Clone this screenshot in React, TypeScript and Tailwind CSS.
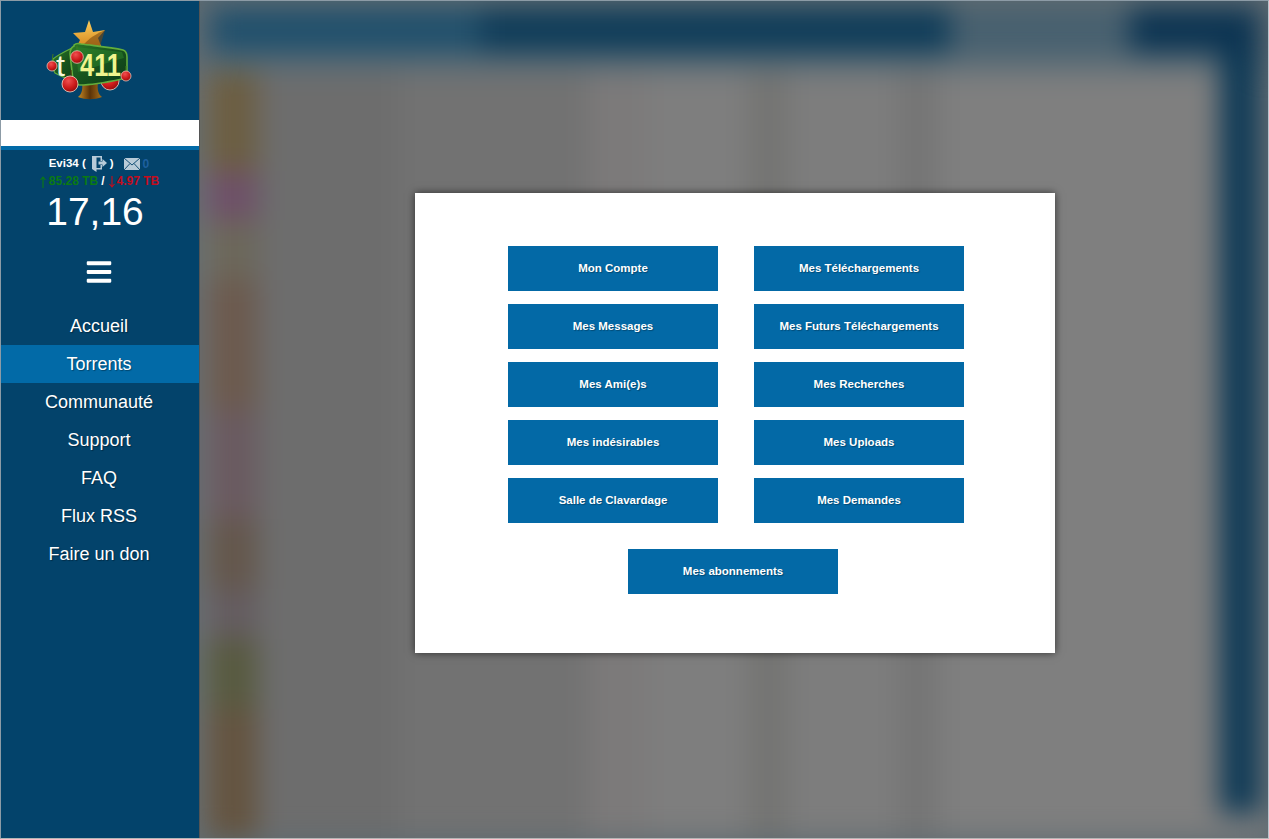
import { FaBars } from "react-icons/fa";

const navItems = ["Accueil", "Torrents", "Communauté", "Support", "FAQ", "Flux RSS", "Faire un don"];

const leftButtons = ["Mon Compte", "Mes Messages", "Mes Ami(e)s", "Mes indésirables", "Salle de Clavardage"];
const rightButtons = [
  "Mes Téléchargements",
  "Mes Futurs Téléchargements",
  "Mes Recherches",
  "Mes Uploads",
  "Mes Demandes",
];

// t411 christmas logo
const Logo = () => (
  <svg width="90" height="84" viewBox="45 18 90 84" className="block">
    <defs>
      <linearGradient id="star" x1="0" y1="0" x2="0" y2="1">
        <stop offset="0" stopColor="#fbd060" />
        <stop offset="1" stopColor="#d98a1e" />
      </linearGradient>
      <linearGradient id="plate" x1="0" y1="0" x2="1" y2="1">
        <stop offset="0" stopColor="#2c7a28" />
        <stop offset="0.5" stopColor="#17531d" />
        <stop offset="1" stopColor="#0c3a18" />
      </linearGradient>
      <linearGradient id="trunk" x1="0" y1="0" x2="1" y2="0">
        <stop offset="0" stopColor="#c98a24" />
        <stop offset="0.5" stopColor="#5a3208" />
        <stop offset="1" stopColor="#a8701a" />
      </linearGradient>
      <radialGradient id="ball" cx="0.4" cy="0.3" r="0.75">
        <stop offset="0" stopColor="#f05050" />
        <stop offset="0.6" stopColor="#cc1a1a" />
        <stop offset="1" stopColor="#8c0c0c" />
      </radialGradient>
    </defs>
    <path d="M82 82 H98 C97 89 98 94 102 97 C94 100 86 100 78 97 C82 94 83 89 82 82Z" fill="url(#trunk)" />
    <circle cx="110" cy="81" r="9" fill="url(#ball)" stroke="#f6d9c8" strokeWidth="0.8" />
    <path d="M89 20 L93 32 L105 30 L98 38 L101 46 L77 46 L80 40 L73 33 L85 32Z" fill="url(#star)" />
    <path d="M84 44 C92 36 98 33 105 30 L100 46Z" fill="#7a4a10" opacity="0.6" />
    <path d="M53 59 C59 54 68 50 76 46 L80 81 C70 80 60 76 55 73 C52 68 52 63 53 59Z" fill="url(#plate)" stroke="#62ad3c" strokeWidth="1.2" />
    <path d="M74 45 C76 43 78 43 81 44 C96 46 110 47 123 50 C126 51 127 54 127 57 L127 72 C127 76 125 78 122 79 C108 82 92 85 80 85 C76 85 74 83 73 80 L70 54 C70 50 72 47 74 46Z" fill="url(#plate)" stroke="#62ad3c" strokeWidth="1.6" />
    <path d="M76 47 L122 52 L124 58 C108 62 94 68 78 72Z" fill="#2f8a2c" opacity="0.45" />
    <text x="56" y="76" textLength="9" lengthAdjust="spacingAndGlyphs" fontFamily="'Liberation Sans', sans-serif" fontWeight="400" fontSize="30" fill="#f7f8dc">t</text>
    <text x="80" y="76" textLength="41" lengthAdjust="spacingAndGlyphs" fontFamily="'Liberation Sans', sans-serif" fontWeight="700" fontSize="32" fill="#f0f48e">411</text>
    <line x1="53" y1="54" x2="52" y2="62" stroke="#3f7a20" strokeWidth="1" />
    <circle cx="52" cy="66" r="5" fill="url(#ball)" stroke="#f6d9c8" strokeWidth="0.7" />
    <line x1="77" y1="46" x2="77" y2="51" stroke="#3f7a20" strokeWidth="1" />
    <circle cx="77" cy="57" r="6.3" fill="url(#ball)" stroke="#f6d9c8" strokeWidth="0.7" />
    <line x1="71" y1="70" x2="71" y2="76" stroke="#5a3208" strokeWidth="1" />
    <circle cx="70" cy="84" r="8" fill="url(#ball)" stroke="#f6d9c8" strokeWidth="0.8" />
    <line x1="126" y1="66" x2="126" y2="72" stroke="#3f7a20" strokeWidth="1" />
    <circle cx="126" cy="76" r="5" fill="url(#ball)" stroke="#f6d9c8" strokeWidth="0.7" />
  </svg>
);

const LogoutIcon = () => (
  <svg width="17" height="17" viewBox="0 0 17 17" className="block">
    <path d="M1 1 H11 V6 H9.5 V2.5 H5.5 L5.5 13 H9.5 V10 H11 V14.5 H5.5 V17 L1 14Z" fill="#b9cbd8" />
    <path d="M7.5 6.5 H11.5 V4 L16 8 L11.5 12 V9.5 H7.5Z" fill="#b9cbd8" />
  </svg>
);

const MailIcon = () => (
  <svg width="16" height="12" viewBox="0 0 16 12" className="block">
    <rect width="16" height="12" fill="#b9cbd8" />
    <path d="M0 0 L8 7 L16 0 M0 12 L6 5.5 M16 12 L10 5.5" fill="none" stroke="#03436b" strokeWidth="0.9" />
  </svg>
);

const Arrow = ({ up, color }: { up: boolean; color: string }) => (
  <svg width="6" height="12" viewBox="0 0 6 12" className="mt-[1px] block" fill="none" stroke={color} strokeWidth="1.1">
    {up ? <path d="M3 12 V1 M0.5 4 L3 1 L5.5 4" /> : <path d="M3 0 V11 M0.5 8 L3 11 L5.5 8" />}
  </svg>
);

const Sidebar = () => (
  <aside className="flex w-[198px] shrink-0 flex-col bg-[#03436b] text-white">
    <div className="h-[119px] pl-[44px] pt-[17px]">
      <Logo />
    </div>
    <div className="h-[26px] bg-white" />
    <div className="h-[4px] bg-[#026aa7]" />

    <div className="mt-[3px] flex h-[19px] items-center justify-center pr-[2px] pt-[2px] text-[11.5px] font-bold leading-none">
      <span>Evi34 (</span>
      <span className="ml-[5px]">
        <LogoutIcon />
      </span>
      <span className="ml-[2px]">)</span>
      <span className="ml-[10px]">
        <MailIcon />
      </span>
      <span className="ml-[3px] text-[12px] text-[#1e5f9e]">0</span>
    </div>
    <div className="flex h-[18px] items-center justify-center pr-[1px] text-[12px] font-bold leading-none">
      <Arrow up color="#0b7a13" />
      <span className="ml-[3px] text-[#0b7a13]">85.28 TB</span>
      <span className="ml-[3px]">/</span>
      <span className="ml-[4px]">
        <Arrow up={false} color="#c40d1e" />
      </span>
      <span className="ml-[2px] text-[#c40d1e]">4.97 TB</span>
    </div>
    <div className="mr-[10px] h-[43px] text-center font-normal text-[39px] leading-[43px]">17,16</div>

    <div className="mt-[25px] flex h-[28px] justify-center pr-[2px]">
      <FaBars size={28} />
    </div>

    <nav className="mt-[21px] flex flex-col">
      {navItems.map((item) => (
        <a
          key={item}
          href="#"
          className={`flex h-[38px] items-center justify-center pr-[2px] text-[18px] [text-shadow:1px_1px_1px_rgba(0,0,0,0.35)] ${
            item === "Torrents" ? "bg-[#026aa7]" : ""
          }`}
        >
          {item}
        </a>
      ))}
    </nav>
  </aside>
);

const MenuButton = ({ label }: { label: string }) => (
  <a
    href="#"
    className="flex h-[45px] w-[210px] items-center justify-center bg-[#0369a6] text-[11.5px] font-bold text-white [text-shadow:1px_1px_1px_rgba(0,0,0,0.3)]"
  >
    {label}
  </a>
);

// blurred page behind the modal
const BlurredPage = () => (
  <div className="flex h-full flex-col blur-[14px]">
    <div className="ml-[10px] mr-[8px] mt-[6px] flex h-[46px] shrink-0">
      <div className="w-[270px] bg-[#21506c]" />
      <div className="w-[470px] bg-[#0f3c59]" />
      <div className="w-[180px] bg-[#47606f]" />
      <div className="flex-1 bg-[#0c3452]" />
    </div>
    <div className="ml-[10px] mr-[8px] flex h-[18px] shrink-0">
      <div className="flex-1 bg-[#5a6c76]" />
      <div className="w-[40px] bg-[#0c3855]" />
    </div>
    <div className="flex min-h-0 flex-1 bg-[#7f7f7f]">
      <div className="ml-[6px] flex w-[52px] shrink-0 flex-col">
        <div className="h-[100px] bg-[#6c5e42]" />
        <div className="h-[50px] bg-[#6e5068]" />
        <div className="h-[60px] bg-[#6c675a]" />
        <div className="h-[130px] bg-[#6c5a4e]" />
        <div className="h-[110px] bg-[#6a5a60]" />
        <div className="h-[70px] bg-[#64574c]" />
        <div className="h-[50px] bg-[#645c60]" />
        <div className="h-[70px] bg-[#585a40]" />
        <div className="h-[130px] bg-[#645440]" />
      </div>
      <div className="flex min-w-0 flex-1">
        <div className="w-[140px] bg-[#6d6d6d]" />
        <div className="w-[190px] bg-[#727272]" />
        <div className="w-[60px] bg-[#7c7a7a]" />
        <div className="w-[100px] bg-[#7e7e7e]" />
        <div className="w-[40px] bg-[#747472]" />
        <div className="w-[110px] bg-[#7d7d7d]" />
        <div className="w-[40px] bg-[#757575]" />
        <div className="flex-1 bg-[#7f7f7f]" />
      </div>
      <div className="flex w-[48px] shrink-0 flex-col">
        <div className="mb-[24px] mr-[8px] flex-1 bg-[#0c3855]" />
      </div>
    </div>
  </div>
);

const App = () => (
  <div className="flex h-[839px] w-[1269px] overflow-hidden border border-l-[#8c9ba6] border-t-[#8c9ba6] border-r-[#b9c4cc] border-b-[#b5b5b5] font-['Liberation_Sans',Arial,sans-serif]">
    <Sidebar />
    <main className="relative min-w-0 flex-1 overflow-hidden border-l border-l-[#555] bg-[#5f6b72]">
      <BlurredPage />
      <div className="absolute left-[215px] top-[192px] h-[460px] w-[640px] bg-white pl-[93px] pt-[53px] shadow-[0_0_8px_rgba(0,0,0,0.6)]">
        <div className="flex gap-[36px]">
          <div className="flex flex-col gap-[13px]">
            {leftButtons.map((label) => (
              <MenuButton key={label} label={label} />
            ))}
          </div>
          <div className="flex flex-col gap-[13px]">
            {rightButtons.map((label) => (
              <MenuButton key={label} label={label} />
            ))}
          </div>
        </div>
        <div className="ml-[120px] mt-[26px]">
          <MenuButton label="Mes abonnements" />
        </div>
      </div>
    </main>
  </div>
);

export default App;
